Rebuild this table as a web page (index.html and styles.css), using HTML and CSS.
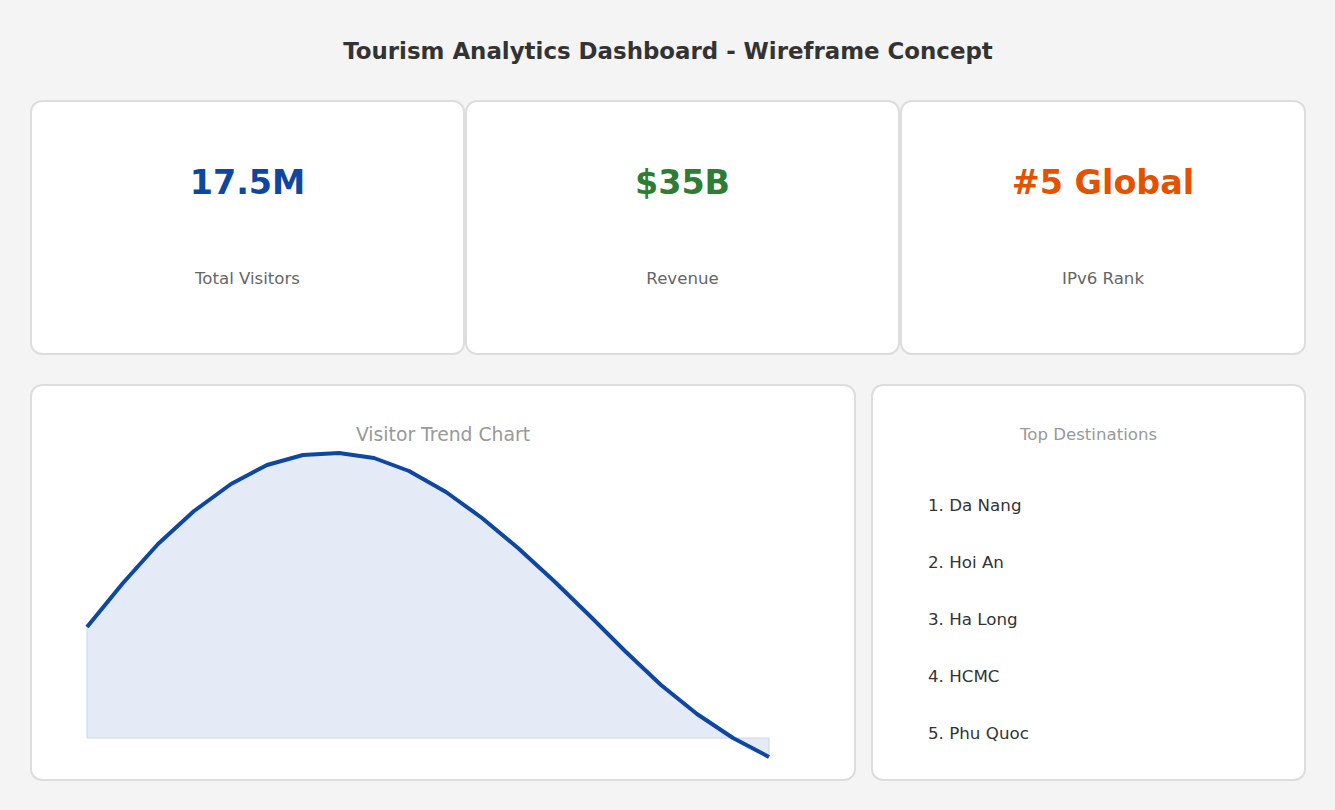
FILE: index.html
```html
<!DOCTYPE html>
<html lang="en">
<head>
<meta charset="utf-8">
<title>Tourism Analytics Dashboard</title>
<link rel="stylesheet" href="styles.css">
</head>
<body>
<div class="page">
  <h1 class="title">Tourism Analytics Dashboard - Wireframe Concept</h1>
  <div class="kpi-row">
    <div class="card kpi kpi-wide">
      <div class="kpi-value blue">17.5M</div>
      <div class="kpi-label">Total Visitors</div>
    </div>
    <div class="card kpi kpi-wide">
      <div class="kpi-value green">$35B</div>
      <div class="kpi-label">Revenue</div>
    </div>
    <div class="card kpi kpi-narrow">
      <div class="kpi-value orange">#5 Global</div>
      <div class="kpi-label">IPv6 Rank</div>
    </div>
  </div>
  <div class="bottom-row">
    <div class="card chart-card">
      <div class="chart-title">Visitor Trend Chart</div>
      <svg class="chart" width="822" height="322" viewBox="32 448 822 322" xmlns="http://www.w3.org/2000/svg">
        <polygon class="area" points="87,627 123,583 158,544 194,511 231,484 267,465 303,455 339,453 374,458 409,471 446,492 482,518 518,548 554,581 590,616 625,651 661,685 697,714 733,738 769,757 769,738 87,738"/>
        <polyline class="line" points="87,627 123,583 158,544 194,511 231,484 267,465 303,455 339,453 374,458 409,471 446,492 482,518 518,548 554,581 590,616 625,651 661,685 697,714 733,738 769,757"/>
      </svg>
    </div>
    <div class="card list-card">
      <div class="list-title">Top Destinations</div>
      <ul class="dest-list">
        <li>1. Da Nang</li>
        <li>2. Hoi An</li>
        <li>3. Ha Long</li>
        <li>4. HCMC</li>
        <li>5. Phu Quoc</li>
      </ul>
    </div>
  </div>
</div>
</body>
</html>
```

FILE: styles.css
```css
* { box-sizing: border-box; }
html, body {
  margin: 0;
  padding: 0;
  background: #f4f4f4;
  font-family: "DejaVu Sans", Verdana, sans-serif;
  color: #333;
}
.page {
  width: 1276px;
  margin-left: 30px;
  padding-top: 36px;
}
.title {
  margin: 0 0 34px 0;
  font-size: 22.9px;
  line-height: 30px;
  font-weight: bold;
  text-align: center;
  color: #333;
}
.card {
  background: #fff;
  border: 2px solid #dddddd;
  border-radius: 12px;
}
.kpi-row {
  display: flex;
  height: 255px;
  margin-bottom: 29px;
}
.kpi {
  display: flex;
  flex-direction: column;
  align-items: center;
  padding-top: 61px;
}
.kpi-wide { width: 435px; }
.kpi-narrow { width: 406px; }
.kpi-value {
  font-size: 33.4px;
  line-height: 40px;
  font-weight: bold;
}
.kpi-label {
  margin-top: 66px;
  font-size: 16.6px;
  line-height: 20px;
  color: #666;
}
.blue { color: #0d47a1; }
.green { color: #2e7d32; }
.orange { color: #e65100; }
.bottom-row {
  display: flex;
  gap: 15px;
  height: 397px;
}
.chart-card {
  width: 826px;
  padding-top: 37px;
}
.chart-title {
  text-align: center;
  font-size: 18.8px;
  line-height: 24px;
  color: #999;
}
.chart {
  display: block;
  margin-top: 1px;
}
.area {
  fill: #e4ebf6;
  stroke: #cbd7ec;
  stroke-width: 1;
}
.line {
  fill: none;
  stroke: #0d47a1;
  stroke-width: 4;
  stroke-linejoin: round;
}
.list-card {
  width: 435px;
  padding-top: 37px;
  padding-left: 55px;
}
.list-title {
  margin-left: -55px;
  text-align: center;
  font-size: 16.6px;
  line-height: 24px;
  color: #999;
}
.dest-list {
  list-style: none;
  margin: 29.5px 0 0 0;
  padding: 0;
}
.dest-list li {
  height: 57px;
  line-height: 57px;
  font-size: 16.7px;
  color: #333;
}
```
